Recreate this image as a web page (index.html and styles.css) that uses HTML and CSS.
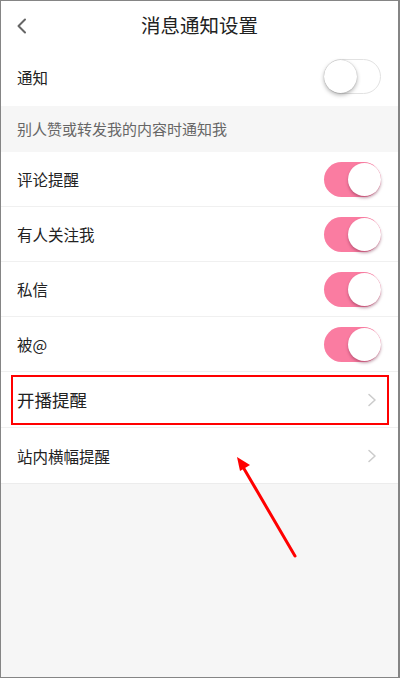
FILE: index.html
```html
<!DOCTYPE html>
<html lang="zh-CN">
<head>
<meta charset="utf-8">
<title>消息通知设置</title>
<link rel="stylesheet" href="styles.css">
</head>
<body>
<div class="frame">
  <header class="header">
    <svg class="back" width="12" height="16" viewBox="0 0 12 16"><path d="M9 1.5 L2.5 8 L9 14.5" fill="none" stroke="#666" stroke-width="2" stroke-linecap="round" stroke-linejoin="round"/></svg>
    <h1 class="title">消息通知设置</h1>
  </header>
  <div class="row row-main">
    <span class="label">通知</span>
    <span class="switch off"><span class="knob"></span></span>
  </div>
  <div class="section">别人赞或转发我的内容时通知我</div>
  <div class="list">
    <div class="row"><span class="label">评论提醒</span><span class="switch on"><span class="knob"></span></span></div>
    <div class="row"><span class="label">有人关注我</span><span class="switch on"><span class="knob"></span></span></div>
    <div class="row"><span class="label">私信</span><span class="switch on"><span class="knob"></span></span></div>
    <div class="row"><span class="label">被@</span><span class="switch on"><span class="knob"></span></span></div>
    <div class="row tall highlighted">
      <span class="label big">开播提醒</span>
      <svg class="chev" width="10" height="14" viewBox="0 0 10 14"><path d="M2 1.5 L8 7 L2 12.5" fill="none" stroke="#ccc" stroke-width="1.6" stroke-linecap="round" stroke-linejoin="round"/></svg>
    </div>
    <div class="row tall">
      <span class="label">站内横幅提醒</span>
      <svg class="chev" width="10" height="14" viewBox="0 0 10 14"><path d="M2 1.5 L8 7 L2 12.5" fill="none" stroke="#ccc" stroke-width="1.6" stroke-linecap="round" stroke-linejoin="round"/></svg>
    </div>
  </div>
  <svg class="arrow" width="400" height="678" viewBox="0 0 400 678">
    <line x1="295" y1="556" x2="243" y2="467" stroke="#f00" stroke-width="3" stroke-linecap="round"/>
    <polygon points="237,457 250,465 240,471" fill="#f00"/>
  </svg>
</div>
</body>
</html>
```
FILE: styles.css
```css
* { box-sizing: border-box; }
html, body { margin: 0; padding: 0; }
body {
  font-family: "Noto Sans CJK SC", "Noto Sans", sans-serif;
  background: #fff;
}
.frame {
  position: relative;
  width: 400px;
  height: 678px;
  border: 1px solid #858585;
  border-right-width: 2px;
  background: #f6f6f6;
  overflow: hidden;
}
.header {
  position: relative;
  height: 46px;
  background: #fff;
  display: flex;
  align-items: center;
  justify-content: center;
}
.back {
  position: absolute;
  left: 15px;
  top: 17px;
}
.title {
  margin: 0;
  font-size: 19.5px;
  font-weight: 400;
  color: #222;
  letter-spacing: 0;
}
.row {
  height: 55px;
  background: #fff;
  display: flex;
  align-items: center;
  justify-content: space-between;
  padding: 0 17px 0 16px;
  border-bottom: 1px solid #f0f0f0;
}
.row.tall { height: 56px; }
.row-main {
  height: 59px;
  border-bottom: none;
}
.list .row:last-child { border-bottom: 1px solid #ececec; }
.label {
  font-size: 15.5px;
  color: #222;
}
.label.big { font-size: 17.5px; }
.section {
  height: 46px;
  display: flex;
  align-items: center;
  padding-left: 16px;
  padding-bottom: 1px;
  font-size: 15px;
  color: #666;
}
.switch {
  position: relative;
  width: 57px;
  height: 35px;
  border-radius: 18px;
  flex: none;
}
.switch.on { background: #fa7ca1; }
.switch.off {
  background: #fff;
  border: 1.5px solid #e2e2e2;
}
.knob {
  position: absolute;
  top: 1px;
  width: 33px;
  height: 33px;
  border-radius: 50%;
  background: #fff;
}
.switch.on .knob {
  right: 0;
  box-shadow: 0 2px 3px rgba(120, 40, 70, 0.45);
}
.switch.off .knob {
  left: -1px;
  top: -0.5px;
  box-shadow: 0 2px 4px rgba(0, 0, 0, 0.3), 0 0 1px rgba(0,0,0,0.3);
}
.chev { flex: none; margin-right: 4px; }
.highlighted {
  position: relative;
}
.highlighted::after {
  content: "";
  position: absolute;
  left: 10px;
  right: 9px;
  top: 3px;
  bottom: 2px;
  border: 2px solid #f00;
  pointer-events: none;
}
.arrow {
  position: absolute;
  left: -1px;
  top: -1px;
  pointer-events: none;
}
```
